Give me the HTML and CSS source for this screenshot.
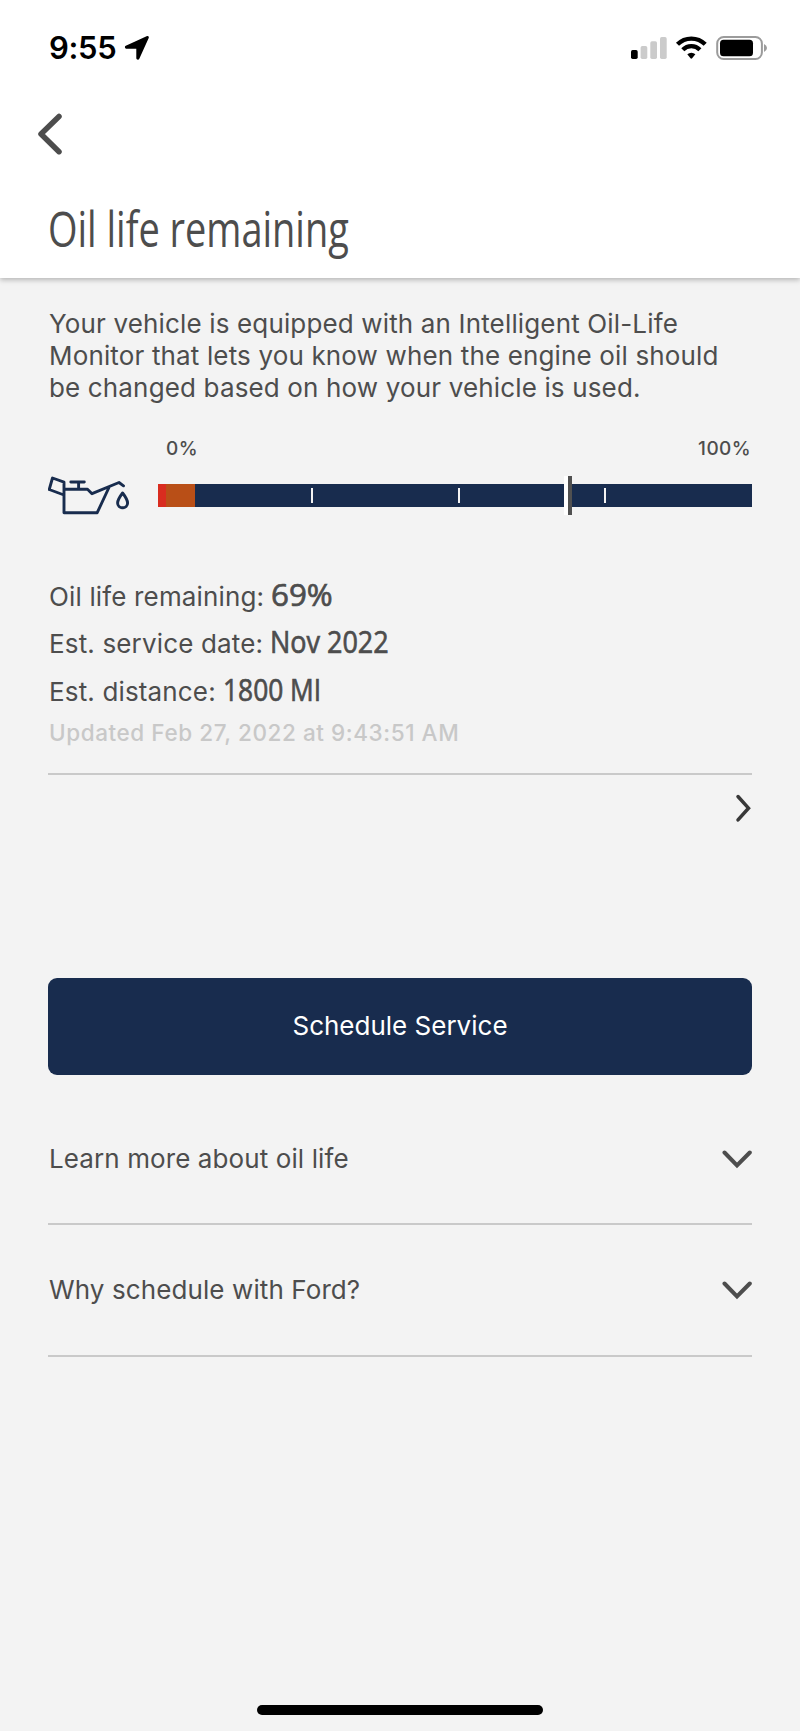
FILE: index.html
```html
<!DOCTYPE html>
<html lang="en">
<head>
<meta charset="utf-8">
<title>Oil life remaining</title>
<link rel="stylesheet" href="styles.css">
</head>
<body>
<div class="screen">
  <header class="header">
    <div class="status">
      <span class="time">9:55</span>
      <svg class="location" width="26" height="26" viewBox="0 0 26 26"><path d="M1.8 10.7 22.6 1.3C24 .7 25.3 1.6 24.7 3L15.3 23.8C14.6 25.2 12.3 24.8 12.3 23V13.7H3C.8 13.7.3 11.4 1.8 10.7Z"/></svg>
      <svg class="indicators" width="140" height="28" viewBox="0 0 140 28">
        <rect x="1" y="14" width="6.700" height="9" rx="1.700"/>
        <g fill="#cbcbcb"><rect x="10.600" y="10" width="6.700" height="13" rx="1.700"/><rect x="20.300" y="5.300" width="6.700" height="17.700" rx="1.700"/><rect x="30" y="1" width="6.700" height="22" rx="1.700"/></g>
        <g fill="none" stroke="#000" stroke-width="4.300"><path d="M47.500 8.300a19.500 19.500 0 0 1 27.700 0"/><path d="M52.800 13.800a12 12 0 0 1 17.100 0"/></g>
        <path d="M57.300 18.300a6 6 0 0 1 8.100 0l-3.300 4q-.8.800-1.600 0z"/>
        <rect x="87.200" y="1" width="44.700" height="22" rx="6.500" fill="none" stroke="#9b9b9b" stroke-width="2"/>
        <rect x="90" y="3.800" width="33" height="16.500" rx="3.500"/>
        <path d="M134 8q3 1.500 3 4t-3 4z" fill="#9b9b9b"/>
      </svg>
    </div>
    <svg class="back" width="28" height="44" viewBox="0 0 28 44"><path d="M23 4.500 5 22l18 17.700"/></svg>
    <h1 class="title"><span class="title-text">Oil life remaining</span></h1>
  </header>
  <main class="content">
    <p class="intro">Your vehicle is equipped with an Intelligent Oil-Life<br>Monitor that lets you know when the engine oil should<br>be changed based on how your vehicle is used.</p>
    <div class="scale"><span>0%</span><span>100%</span></div>
    <div class="gauge">
      <svg class="can" width="82" height="40" viewBox="0 0 82 40"><path d="M16 33.800V7.200L4.500 3 1.200 14.500 16 20M16 14.200h23.500l4.500 4.500L71 7.500l4.500 3.300M16 37.700h33.200l12-25.700M16 33v4.700M22.800 7h13.500M30.600 7v7"/><path d="M74.600 18q-5 6.500-5 10a5 4.800 0 0 0 10 0q0-3.500-5-10Z"/></svg>
      <div class="bar">
        <i class="low"></i><i class="warn"></i><i class="good"></i>
        <b class="tick first"></b><b class="tick second"></b><b class="tick third"></b><b class="marker"></b>
      </div>
    </div>
    <div class="details">
      <p class="row">Oil life remaining:<strong class="value percent">69%</strong></p>
      <p class="row">Est. service date:<strong class="value date">Nov 2022</strong></p>
      <p class="row">Est. distance:<strong class="value distance">1800 MI</strong></p>
    </div>
    <p class="updated">Updated Feb 27, 2022 at 9:43:51 AM</p>
    <div class="more"><svg width="18" height="30" viewBox="0 0 18 30"><path d="m4 3.500 10.500 11.700-10.500 11.700"/></svg></div>
    <button class="schedule">Schedule Service</button>
    <div class="accordion"><span class="learn">Learn more about oil life</span><svg width="32" height="22" viewBox="0 0 32 22"><path d="m4.500 4.500 12.500 13 12.800-13"/></svg></div>
    <div class="accordion"><span class="why">Why schedule with Ford?</span><svg width="32" height="22" viewBox="0 0 32 22"><path d="m4.500 4.500 12.500 13 12.800-13"/></svg></div>
  </main>
  <div class="home"></div>
</div>
</body>
</html>
```

FILE: styles.css
```css
* { box-sizing: border-box; }
body { margin: 0; background: #f3f3f3; color: #4d4d4d; font-family: Inter, "Liberation Sans", sans-serif; font-size: 26px; line-height: 32px; }
p, h1 { margin: 0; }
svg { display: block; flex: none; }
.screen { width: 800px; height: 1731px; display: flex; flex-direction: column; overflow: hidden; }
.header { height: 278px; flex: none; background: #fff; box-shadow: 0 2px 5px rgba(0,0,0,.25); }
.status { height: 96px; padding: 29px 30px 0 49px; display: flex; align-items: flex-start; color: #000; }
.time { font-size: 31px; font-weight: 600; line-height: 38px; width: 75px; letter-spacing: -.3px; }
.location { margin-top: 6px; }
.indicators { margin: 7px 0 0 auto; }
.back { margin: 16px 0 0 36px; fill: none; stroke: #4d4d4d; stroke-width: 5.5; stroke-linecap: round; stroke-linejoin: round; }
.title { margin: 38px 0 0 48px; height: 68px; font: 400 49px/68px "Open Sans", sans-serif; }
.title-text { display: inline-block; transform: scaleX(.774); transform-origin: left; white-space: nowrap; }
.content { flex: 1; padding: 30px 48px 0; display: flex; flex-direction: column; }
.intro { padding-left: 1px; white-space: nowrap; letter-spacing: .15px; }
.scale { height: 24px; margin-top: 33px; padding: 0 1px 0 118px; display: flex; justify-content: space-between; font-size: 19px; font-weight: 500; line-height: 24px; letter-spacing: .4px; }
.gauge { display: flex; margin-top: 14px; height: 40px; align-items: flex-start; }
.can { fill: none; stroke: #182c4e; stroke-width: 2.9; stroke-linejoin: round; stroke-linecap: round; }
.bar { position: relative; display: flex; width: 594px; height: 23px; margin: 9px 0 0 28px; }
.low { width: 8px; background: #d92c1f; }
.warn { width: 29px; background: #b94f17; }
.good { flex: 1; background: #182c4e; }
.tick { position: absolute; top: 4px; width: 2px; height: 15px; background: #f3f3f3; }
.first { left: 153px; }
.second { left: 300px; }
.third { left: 446px; }
.marker { position: absolute; top: -8px; left: 406px; width: 8px; height: 39px; border-left: 4px solid #fff; background: #505050; }
.details { margin-top: 56px; }
.row { height: 47.300px; padding-left: 1px; line-height: 47px; display: flex; align-items: baseline; white-space: nowrap; letter-spacing: .15px; }
.value { font: 400 31px/47px "Open Sans", sans-serif; letter-spacing: 0; transform-origin: left; margin-left: 7px; -webkit-text-stroke: .7px #4d4d4d; }
.percent { transform: scaleX(1.01); }
.date { transform: scaleX(.87); }
.distance { transform: scaleX(.85); }
.updated { margin-top: 4px; padding-left: 1px; height: 56px; font-size: 22.5px; font-weight: 500; color: #c8c8c8; white-space: nowrap; letter-spacing: .57px; }
.more { height: 205px; padding-top: 18px; border-top: 2px solid #c9c9c9; display: flex; justify-content: flex-end; }
.more svg { fill: none; stroke: #383838; stroke-width: 3.500; stroke-linecap: round; }
.schedule { height: 97px; flex: none; border: 0; border-radius: 9px; background: #182c4e; color: #fff; font: inherit; }
.accordion { height: 131.500px; padding-left: 1px; border-bottom: 2px solid #c9c9c9; display: flex; justify-content: space-between; align-items: center; letter-spacing: .1px; }
.schedule + .accordion { margin-top: 19px; }
.accordion svg { fill: none; stroke: #4d4d4d; stroke-width: 4; stroke-linecap: round; }
.home { flex: none; width: 286px; height: 10px; margin: 0 auto 16px; border-radius: 5px; background: #000; }
```
